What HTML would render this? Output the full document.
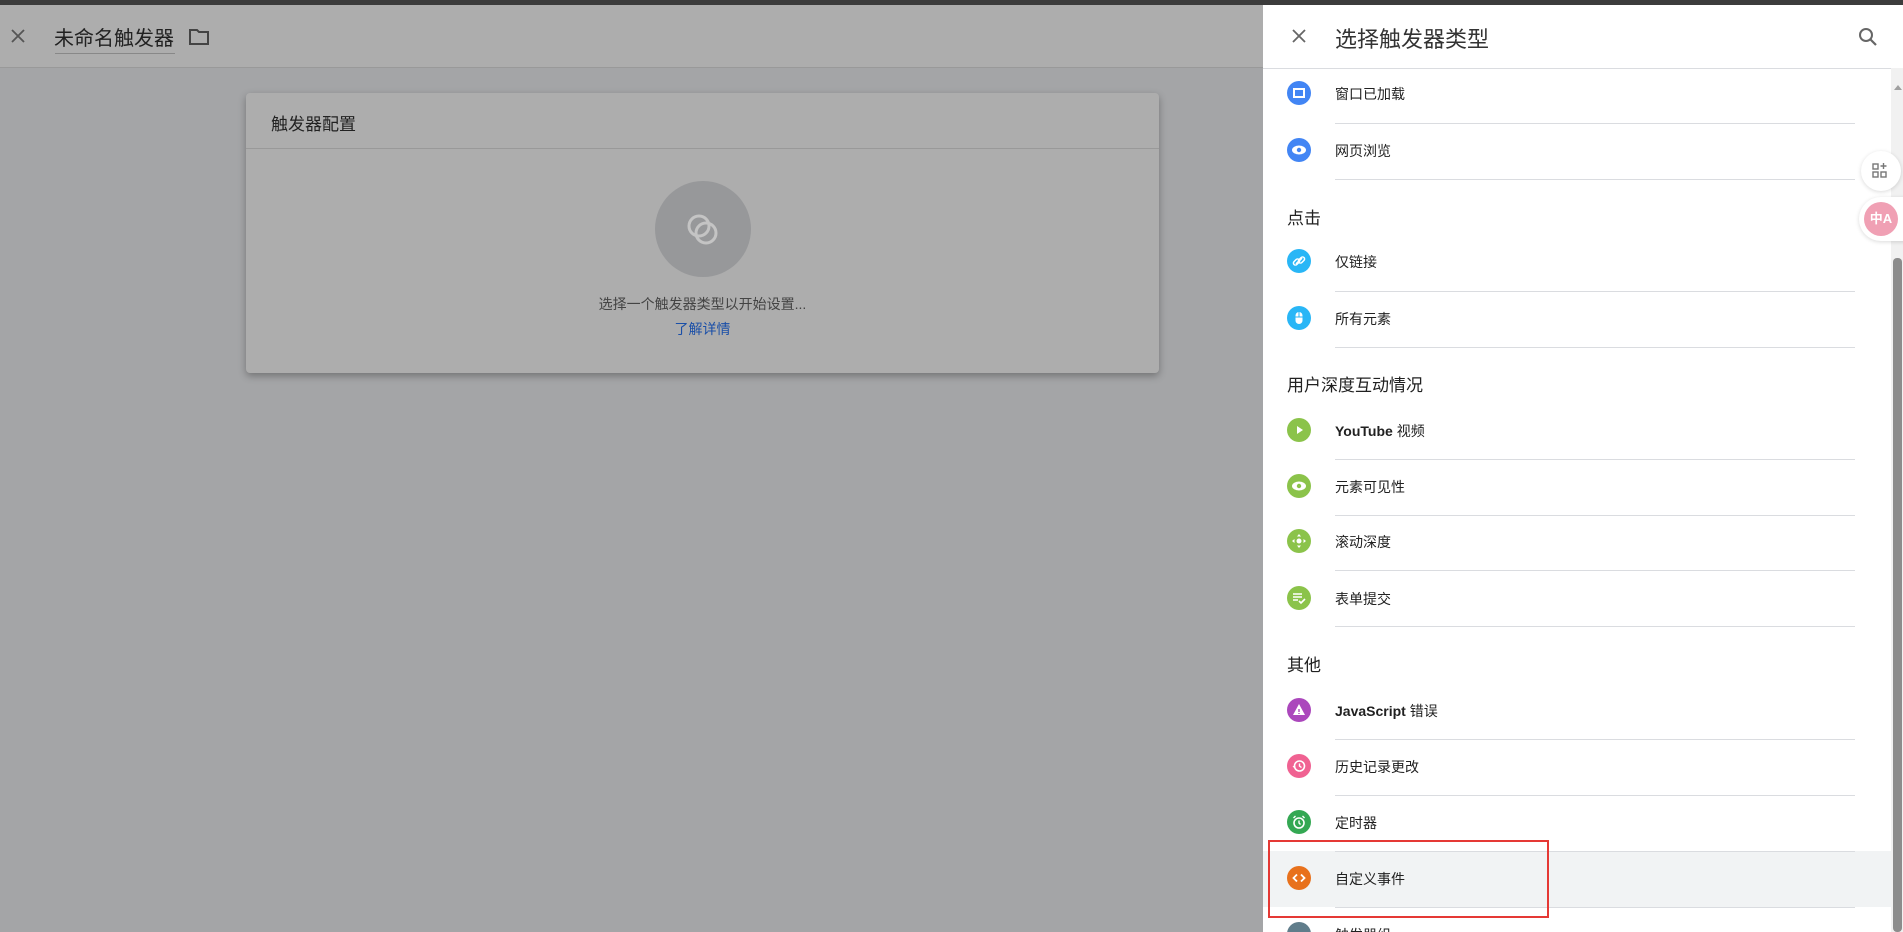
<!DOCTYPE html>
<html style="overflow:hidden;width:1903px;height:932px"><head><meta charset="utf-8"><style>
*{margin:0;padding:0;box-sizing:border-box}
body{width:1903px;height:932px;overflow:hidden;position:relative;background:#a4a5a7;font-family:"Liberation Sans","Noto Sans CJK SC",sans-serif;color:#212121}
.abs{position:absolute}
#top{left:0;top:0;width:1903px;height:5px;background:#3c3c3c;z-index:5}
#hdr{left:0;top:5px;width:1263px;height:63px;background:#adadad;border-bottom:1px solid #999}
.t{white-space:nowrap}
#card{left:246px;top:93px;width:913px;height:280px;background:#adadad;border-radius:4px;box-shadow:0 3px 8px rgba(0,0,0,.3)}
#panel{left:1263px;top:5px;width:640px;height:927px;background:#fff;overflow:hidden}
.ic{position:absolute;width:24px;height:24px;border-radius:50%;left:24px}
.ic svg{position:absolute;left:4px;top:4px}
.lbl{position:absolute;left:72px;font-size:14px;color:#212121;white-space:nowrap}
.sec{position:absolute;left:24px;font-size:17px;color:#212121}
.dv{position:absolute;left:72px;width:520px;height:1px;background:#dadce0}
</style></head><body>
<div id="top" class="abs"></div>
<div id="hdr" class="abs">
 <svg class="abs" style="left:10px;top:23px" width="16" height="16" viewBox="0 0 16 16"><path d="M2 2L14 14M14 2L2 14" stroke="#555" stroke-width="1.8"/></svg>
 <div class="abs t" style="left:54px;top:17px;font-size:20px;color:#222">未命名触发器</div>
 <div class="abs" style="left:55px;top:48px;width:120px;height:1px;background:#888"></div>
 <svg class="abs" style="left:188px;top:22px" width="22" height="20" viewBox="0 0 22 20"><path d="M2 3h7l2 2h9v12H2z" fill="none" stroke="#444" stroke-width="2"/></svg>
</div>
<div id="card" class="abs">
 <div class="abs t" style="left:25px;top:17px;font-size:17px;color:#222">触发器配置</div>
 <div class="abs" style="left:0;top:55px;width:913px;height:1px;background:#999"></div>
 <div class="abs" style="left:409px;top:88px;width:96px;height:96px;border-radius:50%;background:#97989a"></div>
 <svg class="abs" style="left:435px;top:114px" width="44" height="44" viewBox="0 0 44 44"><circle cx="18" cy="19" r="10" fill="none" stroke="#c4c4c4" stroke-width="3"/><circle cx="25" cy="26" r="10" fill="none" stroke="#c4c4c4" stroke-width="3"/></svg>
 <div class="abs t" style="left:0;width:913px;text-align:center;top:201px;font-size:14px;color:#444">选择一个触发器类型以开始设置...</div>
 <div class="abs t" style="left:0;width:913px;text-align:center;top:226px;font-size:14px;color:#1a4fa8">了解详情</div>
</div>
<div id="panel" class="abs">
 <svg class="abs" style="left:28px;top:23px" width="16" height="16" viewBox="0 0 16 16"><path d="M2 2L14 14M14 2L2 14" stroke="#666" stroke-width="1.8"/></svg>
 <div class="abs t" style="left:72px;top:17px;font-size:22px;color:#333">选择触发器类型</div>
 <svg class="abs" style="left:595px;top:22px" width="20" height="20" viewBox="0 0 20 20"><circle cx="8" cy="8" r="6" fill="none" stroke="#666" stroke-width="2"/><path d="M12.5 12.5L18 18" stroke="#666" stroke-width="2.2"/></svg>
 <div class="abs" style="left:0;top:63px;width:640px;height:1px;background:#dadce0"></div>

 <div class="ic" style="top:76px;background:#4285f4"><svg width="16" height="16"><rect x="3" y="4" width="10" height="8" fill="none" stroke="#fff" stroke-width="2"/></svg></div>
 <div class="lbl" style="top:79px">窗口已加载</div>
 <div class="dv" style="top:118px"></div>
 <div class="ic" style="top:133px;background:#4285f4"><svg width="16" height="16"><ellipse cx="8" cy="8" rx="7" ry="4.5" fill="#fff"/><circle cx="8" cy="8" r="2.2" fill="#4285f4"/></svg></div>
 <div class="lbl" style="top:136px">网页浏览</div>
 <div class="dv" style="top:174px"></div>
 <div class="sec" style="top:199px">点击</div>
 <div class="ic" style="top:244px;background:#29b6f6"><svg width="16" height="16"><path d="M5 11L11 5" stroke="#fff" stroke-width="1.6"/><rect x="2" y="7" width="7" height="4" rx="2" transform="rotate(-45 5.5 9)" fill="none" stroke="#fff" stroke-width="1.5"/><rect x="7" y="5" width="7" height="4" rx="2" transform="rotate(-45 10.5 7)" fill="none" stroke="#fff" stroke-width="1.5"/></svg></div>
 <div class="lbl" style="top:247px">仅链接</div>
 <div class="dv" style="top:286px"></div>
 <div class="ic" style="top:301px;background:#29b6f6"><svg width="16" height="16"><rect x="4.5" y="2" width="7" height="12" rx="3.5" fill="#fff"/><path d="M8 2v5M4.5 7h7" stroke="#29b6f6" stroke-width="1"/></svg></div>
 <div class="lbl" style="top:304px">所有元素</div>
 <div class="dv" style="top:342px"></div>
 <div class="sec" style="top:366px">用户深度互动情况</div>
 <div class="ic" style="top:413px;background:#8bc34a"><svg width="16" height="16"><path d="M6 4L12 8L6 12z" fill="#fff"/></svg></div>
 <div class="lbl" style="top:416px;font-weight:bold">YouTube <span style="font-weight:normal">视频</span></div>
 <div class="dv" style="top:454px"></div>
 <div class="ic" style="top:469px;background:#8bc34a"><svg width="16" height="16"><ellipse cx="8" cy="8" rx="7" ry="4.5" fill="#fff"/><circle cx="8" cy="8" r="2.2" fill="#8bc34a"/></svg></div>
 <div class="lbl" style="top:472px">元素可见性</div>
 <div class="dv" style="top:510px"></div>
 <div class="ic" style="top:524px;background:#8bc34a"><svg width="16" height="16"><circle cx="8" cy="8" r="2.5" fill="#fff"/><path d="M8 1l2 2.5H6zM8 15l2-2.5H6zM1 8l2.5 2V6zM15 8l-2.5 2V6z" fill="#fff"/></svg></div>
 <div class="lbl" style="top:527px">滚动深度</div>
 <div class="dv" style="top:565px"></div>
 <div class="ic" style="top:581px;background:#8bc34a"><svg width="16" height="16"><path d="M2 4h9M2 7h9M2 10h5" stroke="#fff" stroke-width="1.5"/><path d="M8 11l2 2 4-4" stroke="#fff" stroke-width="1.6" fill="none"/></svg></div>
 <div class="lbl" style="top:584px">表单提交</div>
 <div class="dv" style="top:621px"></div>
 <div class="sec" style="top:646px">其他</div>
 <div class="ic" style="top:693px;background:#ab47bc"><svg width="16" height="16"><path d="M8 2L14 13H2z" fill="#fff"/><path d="M8 7v3M8 11v1" stroke="#ab47bc" stroke-width="1.4"/></svg></div>
 <div class="lbl" style="top:696px;font-weight:bold">JavaScript <span style="font-weight:normal">错误</span></div>
 <div class="dv" style="top:734px"></div>
 <div class="ic" style="top:749px;background:#f06292"><svg width="16" height="16"><circle cx="8.5" cy="8" r="5" fill="none" stroke="#fff" stroke-width="1.6"/><path d="M8.5 5.5V8l2 1.5" stroke="#fff" stroke-width="1.4" fill="none"/><path d="M1.5 8h3L3 10z" fill="#fff"/></svg></div>
 <div class="lbl" style="top:752px">历史记录更改</div>
 <div class="dv" style="top:790px"></div>
 <div class="ic" style="top:805px;background:#34a853"><svg width="16" height="16"><circle cx="8" cy="9" r="5" fill="none" stroke="#fff" stroke-width="1.6"/><path d="M8 6.5V9l1.5 1.5M2.5 4l2-2M13.5 4l-2-2" stroke="#fff" stroke-width="1.4" fill="none"/></svg></div>
 <div class="lbl" style="top:808px">定时器</div>
 <div class="abs" style="left:0;top:846px;width:628px;height:56px;background:#f1f3f4"></div>
 <div class="dv" style="top:846px"></div>
 <div class="ic" style="top:861px;background:#e8711c"><svg width="16" height="16"><path d="M6 4.5L2.5 8L6 11.5M10 4.5L13.5 8L10 11.5" stroke="#fff" stroke-width="1.8" fill="none"/></svg></div>
 <div class="lbl" style="top:864px">自定义事件</div>
 <div class="dv" style="top:902px"></div>
 <div class="ic" style="top:917px;background:#607d8b"></div>
 <div class="lbl" style="top:920px">触发器组</div>

 <div class="abs" style="left:628px;top:63px;width:12px;height:864px;background:#f1f1f1"></div>
 <div class="abs" style="left:631px;top:80px;width:0;height:0;border-left:4px solid transparent;border-right:4px solid transparent;border-bottom:5px solid #a0a0a0"></div>
 <div class="abs" style="left:630px;top:253px;width:9px;height:674px;background:#8c8c8c;border-radius:4px"></div>

 <div class="abs" style="left:598px;top:146px;width:40px;height:40px;border-radius:50%;background:#fff;box-shadow:0 1px 4px rgba(0,0,0,.15)"><svg class="abs" style="left:11px;top:11px" width="18" height="18"><rect x="1" y="2" width="5" height="5" fill="none" stroke="#777" stroke-width="1.4"/><rect x="1" y="10" width="5" height="5" fill="none" stroke="#777" stroke-width="1.4"/><rect x="9" y="10" width="5" height="5" fill="none" stroke="#777" stroke-width="1.4"/><path d="M11.5 1v6M8.5 4h6" stroke="#777" stroke-width="1.4"/></svg></div>
 <div class="abs" style="left:596px;top:192px;width:48px;height:44px;border-radius:22px 0 0 22px;background:#fff;box-shadow:0 1px 4px rgba(0,0,0,.15)"><div class="abs" style="left:5px;top:5px;width:34px;height:34px;border-radius:50%;background:#f0a0b4;color:#fff;font-size:13px;font-weight:bold;text-align:center;line-height:34px">中A</div></div>
</div>
<div class="abs" style="left:1268px;top:840px;width:281px;height:78px;border:2px solid #e53935"></div>
</body></html>
